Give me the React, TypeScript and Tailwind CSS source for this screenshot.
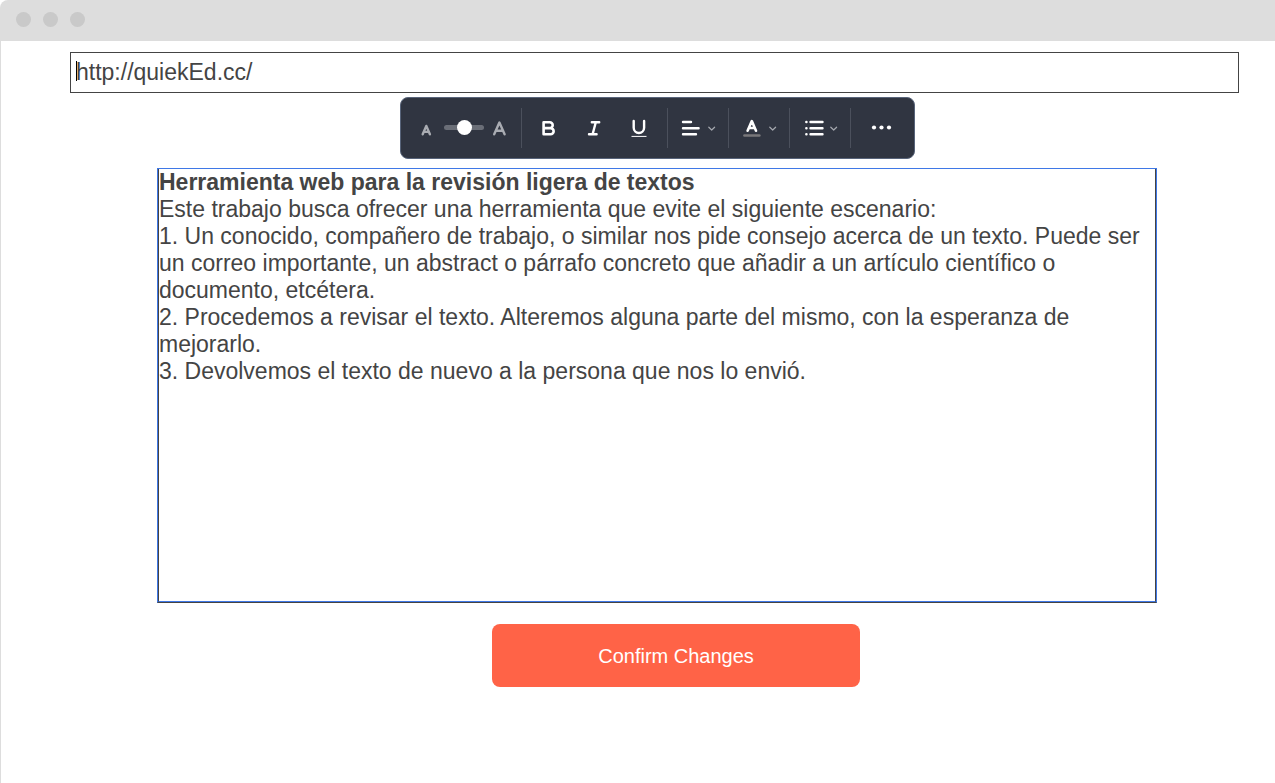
import type { ReactNode } from "react";

function Stroke({ width, children }: { width: number; children: ReactNode }) {
  return (
    <svg
      width={width}
      height={40}
      viewBox={`0 0 ${width} 40`}
      fill="none"
      stroke="currentColor"
      strokeWidth={2.6}
      strokeLinecap="round"
      strokeLinejoin="round"
      aria-hidden="true"
      className="block shrink-0"
    >
      {children}
    </svg>
  );
}

function IconButton({ label, children }: { label: string; children: ReactNode }) {
  return (
    <button type="button" aria-label={label} className="flex h-10 w-[45px] justify-center text-white">
      {children}
    </button>
  );
}

function MenuButton({ label, children }: { label: string; children: ReactNode }) {
  return (
    <button
      type="button"
      aria-label={label}
      aria-haspopup="menu"
      className="flex h-10 w-[61px] shrink-0 border-r border-[#4b505c] text-white"
    >
      <Stroke width={60}>
        {children}
        <path d="M40.8 19.2l2.9 2.8 2.9-2.8" stroke="#a5a8af" strokeWidth={1.2} />
      </Stroke>
    </button>
  );
}

function Toolbar() {
  return (
    <div
      role="toolbar"
      aria-label="Text formatting"
      className="flex h-[62px] w-[515px] max-w-full items-center rounded-lg border border-[#58647a] bg-[#303541]"
    >
      <div className="flex h-10 w-[121px] shrink-0 items-center border-r border-[#4b505c] pl-5 text-[#a9acb2]">
        <Stroke width={11}>
          <path d="M1.7 26.3l3.6-8.4 3.6 8.4M3 23.9h4.6" strokeWidth={2.4} />
        </Stroke>
        <input
          type="range"
          aria-label="Text size"
          defaultValue={52}
          className="mr-2 mb-px ml-3 h-4 w-10 shrink-0 appearance-none bg-transparent [&::-webkit-slider-runnable-track]:h-[5px] [&::-webkit-slider-runnable-track]:rounded-full [&::-webkit-slider-runnable-track]:bg-[#6a6e77] [&::-webkit-slider-thumb]:-mt-[5px] [&::-webkit-slider-thumb]:size-[15px] [&::-webkit-slider-thumb]:appearance-none [&::-webkit-slider-thumb]:rounded-full [&::-webkit-slider-thumb]:bg-white"
        />
        <Stroke width={15}>
          <path d="M2.2 26.3l5.2-11.8 5.2 11.8M4.2 22.8h6.4" strokeWidth={2.4} />
        </Stroke>
      </div>

      <div className="flex h-10 w-[146px] shrink-0 justify-center border-r border-[#4b505c]">
        <IconButton label="Bold">
          <Stroke width={25}>
            <path d="M6.6 14.3h6.2a2.9 2.9 0 0 1 0 5.8H6.6zM6.6 20.1h7a3 3 0 0 1 0 6.1h-7z" />
          </Stroke>
        </IconButton>
        <IconButton label="Italic">
          <Stroke width={25}>
            <path d="M9.8 14.3h7.4M7 26.3h7.6M13.8 14.3l-3.2 12" strokeWidth={2.4} />
          </Stroke>
        </IconButton>
        <IconButton label="Underline">
          <Stroke width={25}>
            <path d="M6.7 13v6.8a5.2 5.2 0 0 0 10.4 0V13" strokeWidth={2.4} />
            <path d="M4.5 28.4h15" strokeWidth={1} strokeLinecap="butt" />
          </Stroke>
        </IconButton>
      </div>

      <MenuButton label="Alignment">
        <path d="M15 14h8M15 20.2h15.6M15 26.3h13" strokeWidth={2.4} />
      </MenuButton>
      <MenuButton label="Text color">
        <path d="M18.6 22.7l4.2-9.6 4.2 9.6M20.3 20h5" />
        <path d="M15.4 27.5h15" stroke="#78777a" strokeWidth={2.5} />
      </MenuButton>
      <MenuButton label="List">
        <path d="M20.5 14h12M20.5 20.2h12M20.5 26.3h12M16.3 14h.2M16.3 20.2h.2M16.3 26.3h.2" strokeWidth={2.4} />
      </MenuButton>

      <button type="button" aria-label="More options" className="flex h-10 flex-1 justify-center text-white">
        <svg width="25" height="40" viewBox="0 0 25 40" fill="currentColor" aria-hidden="true">
          <circle cx="4" cy="19.5" r="2.1" />
          <circle cx="11.5" cy="19.5" r="2.1" />
          <circle cx="19" cy="19.5" r="2.1" />
        </svg>
      </button>
    </div>
  );
}

export default function App() {
  return (
    <div className="flex min-h-screen flex-col font-['Liberation_Sans',Arial,sans-serif] text-[#444]">
      <header className="flex h-[41px] items-center rounded-tl-lg bg-[#ddd] pb-0.5 pl-4">
        <div className="flex gap-3">
          <span className="size-[15px] rounded-full bg-[#c9c9c9]" />
          <span className="size-[15px] rounded-full bg-[#c9c9c9]" />
          <span className="size-[15px] rounded-full bg-[#c9c9c9]" />
        </div>
      </header>

      <main className="flex-1 border-l border-[#ddd] pt-[11px] pr-9 pl-[69px]">
        <div className="relative">
          <input
            type="text"
            aria-label="Address"
            defaultValue="http://quiekEd.cc/"
            className="block h-[41px] w-full border border-[#444] bg-white px-[5px] text-[23px] outline-none"
          />
          <span className="absolute top-[9px] left-1.5 h-5 w-px bg-black" />
        </div>

        <div className="mt-1 mr-[82px] ml-[87px]">
          <div className="flex justify-center">
            <Toolbar />
          </div>

          <div className="mt-[9px] border border-[#3f78e6] border-b-[#444]">
            <div
              role="textbox"
              aria-multiline="true"
              aria-label="Text to review"
              contentEditable
              suppressContentEditableWarning
              className="min-h-[433px] border-x border-b border-[#444] border-b-[#3f78e6] text-[23px] leading-[27px] outline-none"
            >
              <p className="font-bold">Herramienta web para la revisión ligera de textos</p>
              <p>Este trabajo busca ofrecer una herramienta que evite el siguiente escenario:</p>
              <p>
                1. Un conocido, compañero de trabajo, o similar nos pide consejo acerca de un texto. Puede ser un
                correo importante, un abstract o párrafo concreto que añadir a un artículo científico o documento,
                etcétera.
              </p>
              <p>
                2. Procedemos a revisar el texto. Alteremos alguna parte del mismo, con la esperanza de mejorarlo.
              </p>
              <p>3. Devolvemos el texto de nuevo a la persona que nos lo envió.</p>
            </div>
          </div>

          <div className="mt-[21px] flex justify-center pl-[38px]">
            <button
              type="button"
              className="h-[63px] w-[368px] rounded-lg bg-[#ff6347] text-xl text-white"
            >
              Confirm Changes
            </button>
          </div>
        </div>
      </main>
    </div>
  );
}
